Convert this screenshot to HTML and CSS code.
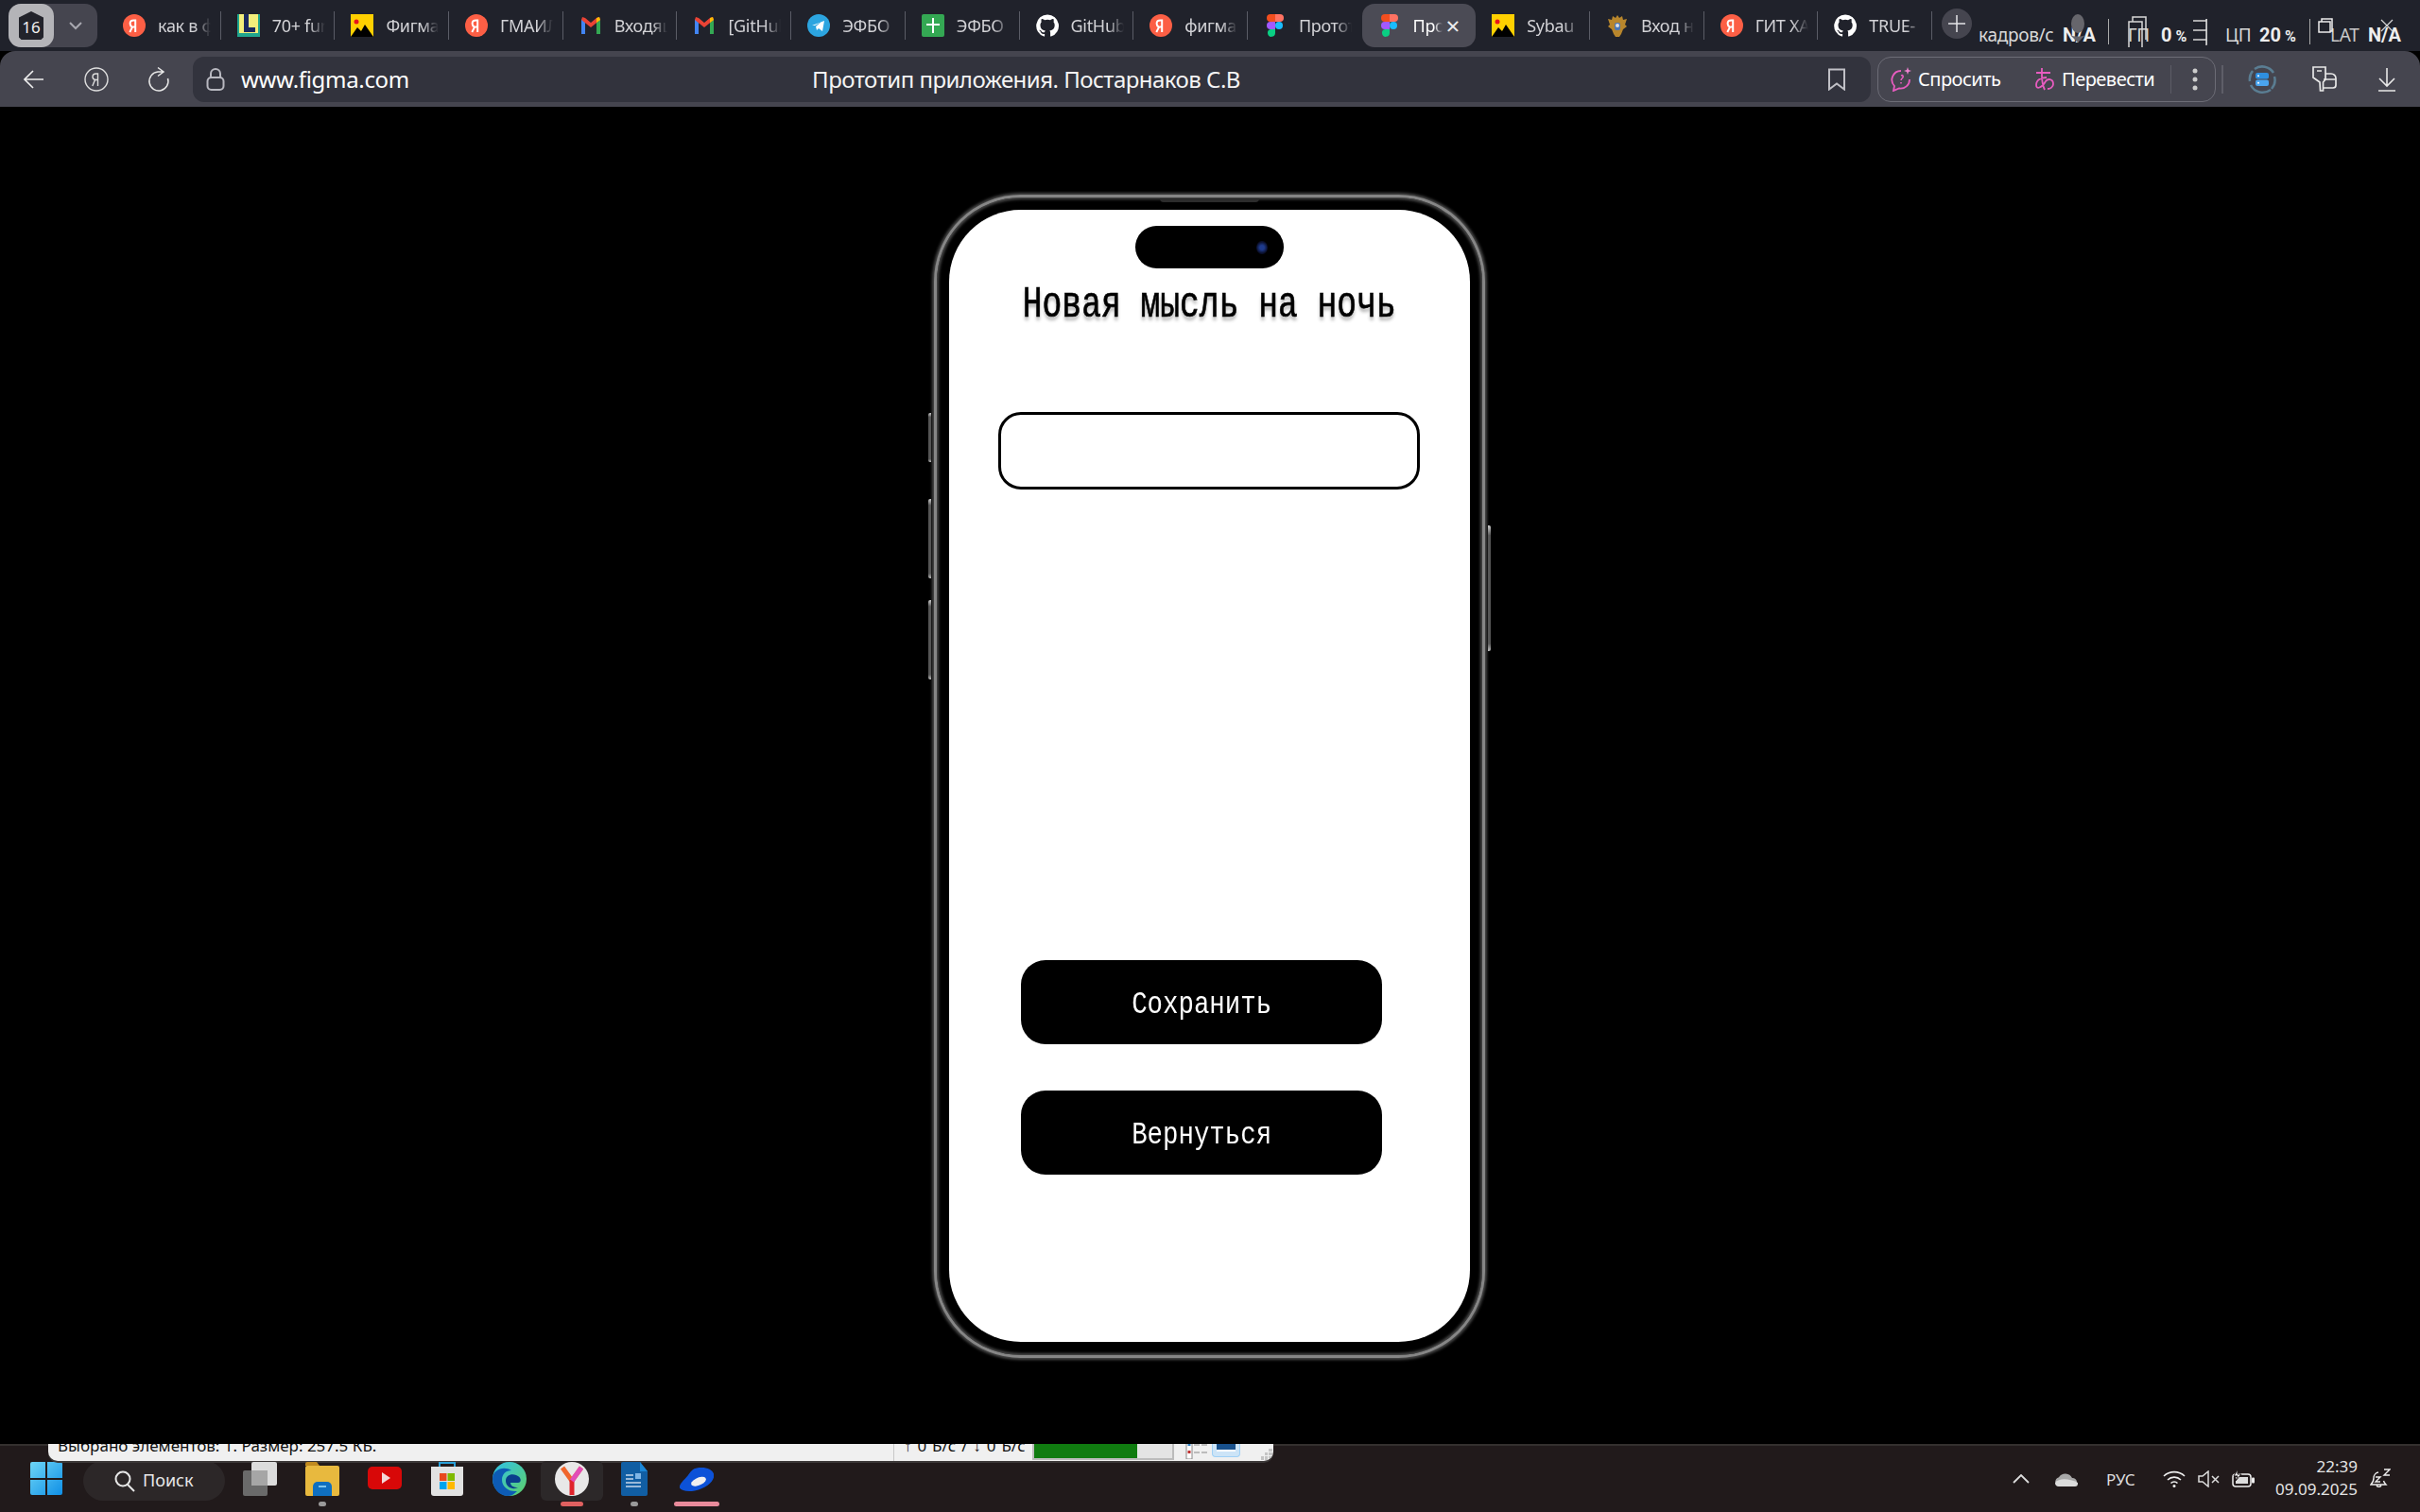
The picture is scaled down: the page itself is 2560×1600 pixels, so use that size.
FILE: index.html
```html
<!DOCTYPE html>
<html lang="ru">
<head>
<meta charset="utf-8">
<title>Прототип приложения. Постарнаков С.В</title>
<link rel="stylesheet" href="styles.css">
</head>
<body>
<svg class="defs" width="0" height="0" aria-hidden="true">
  <symbol id="fav-ya" viewBox="0 0 24 24"><circle cx="12" cy="12" r="12" fill="#fc5f45"/><path d="M13.2 19V6.5h-1.6c-2.6 0-4 1.4-4 3.4 0 1.800.8 2.800 2.400 3.800L7.300 19M13.200 13.500h-2.400" fill="none" stroke="#fff" stroke-width="2"/></symbol>
  <symbol id="fav-l" viewBox="0 0 24 24"><rect width="24" height="24" fill="#20a68e"/><rect x="2" y="0" width="20" height="20" fill="#f3ee7a"/><path d="M7 0h5v14h7v5H7z" fill="#1a2a5e"/></symbol>
  <symbol id="fav-img" viewBox="0 0 24 24"><rect width="24" height="24" fill="#ffd000"/><circle cx="6" cy="8" r="2.500" fill="#e8141c"/><path d="M0 24l7-10 4 4 4-7 9 13z" fill="#000"/></symbol>
  <symbol id="fav-m" viewBox="0 0 24 24"><path d="M2 21V6l4-2v17z" fill="#4285f4"/><path d="M18 21V4l4 2v15z" fill="#34a853"/><path d="M2 6l10 8 10-8-1-3-3 1-6 5-6-5-3-1z" fill="#ea4335"/><path d="M18 4l3-1 1 3-4 3z" fill="#fbbc04"/></symbol>
  <symbol id="fav-tg" viewBox="0 0 24 24"><circle cx="12" cy="12" r="12" fill="#2ca5e0"/><path d="M5 12l13-5-2 11-4-3-2 2-1-4 6-5-7 4z" fill="#fff"/></symbol>
  <symbol id="fav-sh" viewBox="0 0 24 24"><rect width="24" height="24" rx="2" fill="#34a853"/><path d="M11 4h2v6h6v2h-6v8h-2v-8H5v-2h6z" fill="#fff"/></symbol>
  <symbol id="fav-gh" viewBox="0 0 24 24"><path fill="#fff" d="M12 .5A11.800 11.800 0 0 0 8.300 23.500c.6.100.8-.3.800-.6v-2c-3.300.7-4-1.600-4-1.600-.5-1.400-1.300-1.800-1.300-1.800-1.100-.7.100-.7.100-.7 1.200.1 1.800 1.200 1.800 1.200 1.100 1.800 2.800 1.300 3.400 1 .1-.8.400-1.300.8-1.600-2.600-.3-5.400-1.300-5.400-5.900 0-1.300.5-2.300 1.200-3.200-.1-.3-.5-1.500.1-3.200 0 0 1-.3 3.300 1.200a11 11 0 0 1 6 0c2.300-1.500 3.300-1.200 3.300-1.200.6 1.700.2 2.900.1 3.200.8.900 1.200 1.900 1.200 3.200 0 4.600-2.800 5.600-5.400 5.900.4.400.8 1.100.8 2.200v3.300c0 .3.200.7.800.6A11.800 11.800 0 0 0 12 .5z"/></symbol>
  <symbol id="fav-fig" viewBox="0 0 24 24"><path d="M7 0h5v8H7a4 4 0 0 1 0-8z" fill="#f24e1e"/><path d="M12 0h5a4 4 0 0 1 0 8h-5z" fill="#ff7262"/><path d="M7 8h5v8H7a4 4 0 0 1 0-8z" fill="#a259ff"/><circle cx="16" cy="12" r="4" fill="#1abcfe"/><path d="M7 16h5v4a4 4 0 1 1-5-4z" fill="#0acf83"/></symbol>
  <symbol id="fav-eagle" viewBox="0 0 24 24"><path d="M12 1l2 3 3-2 1 4 4-1-2 6 2 2-4 3-2 5-2 3h-4l-2-3-2-5-4-3 2-2-2-6 4 1 1-4 3 2z" fill="#b8862c"/><rect x="9" y="9" width="6" height="8" rx="2" fill="#4a77b8"/><circle cx="12" cy="12" r="2" fill="#e0e0e0"/></symbol>
</svg>

<header class="tabstrip">
  <div class="counter-group">
    <div class="counter"><span class="counter-badge">16</span></div>
    <div class="expander"><svg width="16" height="10" viewBox="0 0 16 10"><path d="M2 2l6 6 6-6" fill="none" stroke="#a8a8b0" stroke-width="2"/></svg></div>
  </div>
  <nav class="tabs">
    <div class="tab"><svg class="fav"><use href="#fav-ya"/></svg><span class="tab-text">как в фигме</span></div>
    <div class="tab"><svg class="fav"><use href="#fav-l"/></svg><span class="tab-text">70+ fun</span></div>
    <div class="tab"><svg class="fav"><use href="#fav-img"/></svg><span class="tab-text">Фигма</span></div>
    <div class="tab"><svg class="fav"><use href="#fav-ya"/></svg><span class="tab-text">ГМАИЛ</span></div>
    <div class="tab"><svg class="fav"><use href="#fav-m"/></svg><span class="tab-text">Входящие</span></div>
    <div class="tab"><svg class="fav"><use href="#fav-m"/></svg><span class="tab-text">[GitHub]</span></div>
    <div class="tab"><svg class="fav"><use href="#fav-tg"/></svg><span class="tab-text">ЭФБО</span></div>
    <div class="tab"><svg class="fav"><use href="#fav-sh"/></svg><span class="tab-text">ЭФБО</span></div>
    <div class="tab"><svg class="fav"><use href="#fav-gh"/></svg><span class="tab-text">GitHub</span></div>
    <div class="tab"><svg class="fav"><use href="#fav-ya"/></svg><span class="tab-text">фигма</span></div>
    <div class="tab tab-before-active"><svg class="fav"><use href="#fav-fig"/></svg><span class="tab-text">Прототип</span></div>
    <div class="tab tab-active"><svg class="fav"><use href="#fav-fig"/></svg><span class="tab-text tab-text-short">Прототип</span><span class="tab-close">×</span></div>
    <div class="tab"><svg class="fav"><use href="#fav-img"/></svg><span class="tab-text">Sybau</span></div>
    <div class="tab"><svg class="fav"><use href="#fav-eagle"/></svg><span class="tab-text">Вход на</span></div>
    <div class="tab"><svg class="fav"><use href="#fav-ya"/></svg><span class="tab-text">ГИТ ХАБ</span></div>
    <div class="tab"><svg class="fav"><use href="#fav-gh"/></svg><span class="tab-text">TRUE-</span></div>
  </nav>
  <div class="new-tab"><svg width="18" height="18" viewBox="0 0 18 18"><path d="M9 0v18M0 9h18" stroke="#e4e4e8" stroke-width="1.500"/></svg></div>
  <div class="overlay">
    <svg class="ghost ghost-mic" viewBox="0 0 22 30"><ellipse cx="11" cy="10" rx="7" ry="10" fill="#66666c"/><path d="M3 22c3 2 13 2 16 0l-8 8z" fill="#66666c"/></svg>
    <svg class="ghost ghost-a" viewBox="0 0 20 34"><path d="M1 33V6h14v27M5 6V1h14v24" fill="none" stroke="#d8d8d8" stroke-width="1.500"/></svg>
    <svg class="ghost ghost-b" viewBox="0 0 16 28"><path d="M0 2h14M0 12h14M0 22h14M14 0v28" fill="none" stroke="#d8d8d8" stroke-width="1.500"/></svg>
    <svg class="ghost ghost-c" viewBox="0 0 16 16"><path d="M1 4h12v11H1zM4 4V1h11v13h-2" fill="none" stroke="#ececec" stroke-width="1.500"/></svg>
    <svg class="ghost ghost-d" viewBox="0 0 14 14"><path d="M1 1l12 12M13 1L1 13" stroke="#d8d8d8" stroke-width="1.200"/></svg>
    <span class="stat-label">кадров/с</span><b class="stat-val">N/A</b>
    <span class="stat-label stat-sep">ГП</span><b class="stat-val">0<small>%</small></b>
    <span class="stat-label stat-sep">ЦП</span><b class="stat-val">20<small>%</small></b>
    <span class="stat-label stat-sep stat-lat">LAT</span><b class="stat-val">N/A</b>
  </div>
</header>

<div class="toolbar">
  <div class="tool-btn"><svg width="22" height="22" viewBox="0 0 22 22"><path d="M21 11H2M10 2l-9 9 9 9" fill="none" stroke="#eee" stroke-width="1.600"/></svg></div>
  <div class="tool-btn"><svg width="26" height="26" viewBox="0 0 26 26"><circle cx="13" cy="13" r="12" fill="none" stroke="#ddd" stroke-width="1.400"/><path d="M14.500 20V7h-2c-2.500 0-3.500 1.500-3.500 3.200 0 1.800 1 3 3 3.300h2.500M11.500 13.500L8.800 20" fill="none" stroke="#ddd" stroke-width="1.400"/></svg></div>
  <div class="tool-btn"><svg width="24" height="28" viewBox="0 0 24 28"><path d="M21.500 13A10 10 0 1 1 11 6h6M11 1.500L17 6l-6 4.500" fill="none" stroke="#e8e8e8" stroke-width="1.500"/></svg></div>
  <div class="address">
    <div class="addr-left">
      <svg width="20" height="26" viewBox="0 0 20 26"><rect x="1.500" y="11" width="17" height="13" rx="4" fill="none" stroke="#b8b8c0" stroke-width="2"/><path d="M5 11V7a5 5 0 0 1 10 0v4" fill="none" stroke="#b8b8c0" stroke-width="2"/></svg>
      <span class="url">www.figma.com</span>
    </div>
    <span class="page-title">Прототип приложения. Постарнаков С.В</span>
    <svg class="bookmark" width="20" height="24" viewBox="0 0 20 24"><path d="M2 1.500h16v21l-8-6-8 6z" fill="none" stroke="#c0c0c6" stroke-width="2"/></svg>
  </div>
  <div class="assist">
    <svg class="assist-icon" width="24" height="26" viewBox="0 0 24 26"><path d="M12 4a9.500 9.500 0 0 0-7 16l-1 5 6-2.500A9.500 9.500 0 0 0 21 13" fill="none" stroke="#e85cc0" stroke-width="1.800"/><path d="M12 9c2-1 3 1 1.500 2.500S12 13 12 14M12 16v1.500" fill="none" stroke="#e85cc0" stroke-width="1.600"/><path d="M19 0l1 3 3 1-3 1-1 3-1-3-3-1 3-1z" fill="#f080d0"/></svg>
    <span class="assist-text assist-ask">Спросить</span>
    <svg class="assist-icon assist-second" width="24" height="26" viewBox="0 0 24 26"><path d="M3 6h15M9 1c0 8-1 15 3 23M14 11c-5 0-11 2-11 8 0 5 6 3 10-4 2-3 8-3 8 3 0 3-3 5-6 5" fill="none" stroke="#e85cc0" stroke-width="1.800"/></svg>
    <span class="assist-text assist-tr">Перевести</span>
    <span class="assist-div"></span>
    <svg class="assist-dots" width="6" height="26" viewBox="0 0 6 26"><circle cx="3" cy="4" r="2.500" fill="#ccc"/><circle cx="3" cy="13" r="2.500" fill="#ccc"/><circle cx="3" cy="22" r="2.500" fill="#ccc"/></svg>
  </div>
  <span class="tool-div"></span>
  <div class="tool-btn"><svg width="32" height="32" viewBox="0 0 32 32"><path d="M8 5a14 14 0 0 1 20 4M25 27A14 14 0 0 1 4 22M3 18A14 14 0 0 1 6 7M29 13a14 14 0 0 1-3 13" fill="none" stroke="#5a7d92" stroke-width="2.500"/><rect x="9" y="9" width="14" height="6.500" rx="2" fill="#2f8fe0"/><rect x="9" y="16.500" width="14" height="6.500" rx="2" fill="#4aa4ee"/><circle cx="12" cy="12.300" r="1" fill="#fff"/><circle cx="12" cy="19.800" r="1" fill="#fff"/></svg></div>
  <div class="tool-btn"><svg width="28" height="28" viewBox="0 0 28 28"><path d="M2 1h13v13l-2.500 3v9h-3l-.5-9L2 12zM15 8h6a5 5 0 0 1 5 5v7a3 3 0 0 1-3 3H13" fill="none" stroke="#e8e8e8" stroke-width="1.700"/><path d="M6 5h5M13 14h13" stroke="#e8e8e8" stroke-width="1.700"/></svg></div>
  <div class="tool-btn"><svg width="20" height="26" viewBox="0 0 20 26"><path d="M10 1v19M2 12l8 8 8-8M1 25h18" fill="none" stroke="#e8e8e8" stroke-width="1.600"/></svg></div>
</div>

<main class="stage">
  <div class="phone">
    <span class="side-key key-1"></span>
    <span class="side-key key-2"></span>
    <span class="side-key key-3"></span>
    <span class="side-key key-r"></span>
    <span class="earpiece"></span>
    <div class="screen">
      <div class="notch"><span class="camera"></span></div>
      <h1 class="title"><span class="title-text">Новая мысль на ночь</span></h1>
      <div class="field"></div>
      <div class="actions">
        <button class="action" type="button"><span class="action-text">Сохранить</span></button>
        <button class="action" type="button"><span class="action-text">Вернуться</span></button>
      </div>
    </div>
  </div>
</main>

<footer class="taskbar">
  <div class="peek">
    <span class="peek-info">Выбрано элементов: 1. Размер: 257.5 КБ.</span>
    <span class="peek-net">↑ 0 Б/с / ↓ 0 Б/с</span>
    <span class="peek-progress"><span class="peek-bar"></span></span>
    <svg class="peek-list" width="24" height="18" viewBox="0 0 24 18"><path d="M1 0v18h6V0z" fill="#fff" stroke="#888"/><rect x="2.500" y="1" width="3" height="3" fill="#2d7fc0"/><rect x="2.500" y="9" width="3" height="3" fill="#c03030"/><path d="M9 3h6M17 3h6M9 11h6M17 11h6" stroke="#aaa" stroke-width="1.500"/></svg>
    <span class="peek-view"><span class="peek-thumb"></span></span>
    <svg class="peek-grip" width="12" height="12" viewBox="0 0 12 12"><path d="M8 0h4v3H8zM4 4h3v3H4zM8 4h4v3H8zM0 8h3v4H0zM4 8h3v4H4zM8 8h4v2H8z" fill="#c4c4c4"/></svg>
  </div>
  <svg class="win-logo" width="34" height="35" viewBox="0 0 34 35"><defs><linearGradient id="winGrad" x1="0" y1="0" x2="1" y2="1"><stop offset="0" stop-color="#6ed6f6"/><stop offset="1" stop-color="#0f8fe6"/></linearGradient></defs><path d="M2 0h14v17H0V2a2 2 0 0 1 2-2zM18 0h14a2 2 0 0 1 2 2v15H18zM0 19h16v16H2a2 2 0 0 1-2-2zM18 19h16v14a2 2 0 0 1-2 2H18z" fill="url(#winGrad)"/></svg>
  <div class="search">
    <svg width="22" height="24" viewBox="0 0 22 24"><circle cx="9" cy="10" r="7.500" fill="none" stroke="#e8e8e8" stroke-width="2"/><path d="M14 16l7 7" stroke="#e8e8e8" stroke-width="2"/></svg>
    <span class="search-text">Поиск</span>
  </div>
  <div class="apps">
    <div class="app"><svg width="36" height="36" viewBox="0 0 36 36"><rect x="0" y="9" width="26" height="27" rx="2" fill="#6a6a6a"/><rect x="9" y="0" width="27" height="25" rx="2" fill="#dcdcdc"/><rect x="9" y="9" width="17" height="16" fill="#a6a6a6"/></svg></div>
    <div class="app app-dot"><svg width="36" height="36" viewBox="0 0 36 36"><path d="M0 2a2 2 0 0 1 2-2h10l3 4H0z" fill="#c08a20"/><rect y="4" width="36" height="32" rx="2" fill="#e8b93e"/><path d="M8 26a5 5 0 0 1 5-5h10a5 5 0 0 1 5 5v10H8z" fill="#0f6fc0"/><path d="M14 26h8" stroke="#7cc4f0" stroke-width="2"/></svg></div>
    <div class="app"><svg class="app-low" width="36" height="24" viewBox="0 0 36 24"><rect width="36" height="24" rx="5" fill="#d80808"/><path d="M15 6l9 6-9 6z" fill="#f4d8d8"/></svg></div>
    <div class="app"><svg width="36" height="36" viewBox="0 0 36 36"><path d="M10 6V1h16v5" fill="none" stroke="#2aa0d8" stroke-width="2"/><path d="M1 5h34v28a3 3 0 0 1-3 3H4a3 3 0 0 1-3-3z" fill="#e2e2e2"/><rect x="10" y="12" width="7.500" height="8" fill="#e8491d"/><rect x="18.500" y="12" width="7.500" height="8" fill="#7fba00"/><rect x="10" y="21" width="7.500" height="8" fill="#00a4ef"/><rect x="18.500" y="21" width="7.500" height="8" fill="#ffb900"/></svg></div>
    <div class="app"><svg width="36" height="36" viewBox="0 0 36 36"><defs><linearGradient id="edgeA" x1="0" y1="0" x2="1" y2="1"><stop offset="0" stop-color="#2fc1e8"/><stop offset="1" stop-color="#5fd068"/></linearGradient></defs><circle cx="18" cy="18" r="18" fill="url(#edgeA)"/><path d="M0 18C0 8 12 4 20 9c-6 0-10 4-10 10 0 7 7 13 16 12-3 3-6 5-10 5C7 36 0 28 0 18z" fill="#0d5bb5"/><path d="M14 20c0-6 6-8 11-6 6 2 6 8 2 8h-8c0 3 3 5 8 5-5 3-13 0-13-7z" fill="#0a3f8c"/></svg></div>
    <div class="app app-active"><svg width="36" height="36" viewBox="0 0 36 36"><circle cx="18" cy="18" r="18" fill="#e8e8e8"/><path d="M8 6l10 14 10-14" fill="none" stroke="#f0662c" stroke-width="5"/><path d="M18 19v16" stroke="#e0242c" stroke-width="5"/><path d="M28 6l-10 14" stroke="#e24cb8" stroke-width="5"/></svg></div>
    <div class="app app-dot"><svg width="28" height="36" viewBox="0 0 28 36"><path d="M0 2a2 2 0 0 1 2-2h18l8 10v24a2 2 0 0 1-2 2H2a2 2 0 0 1-2-2z" fill="#115ea3"/><path d="M20 0l8 10h-8z" fill="#1b86d6"/><path d="M5 14h8M5 18h8M5 22h16M5 26h16" stroke="#c8d8ea" stroke-width="1.500"/><rect x="15" y="12" width="6" height="6" fill="#7fb6e6"/></svg></div>
    <div class="app app-bar"><svg class="app-low" width="36" height="27" viewBox="0 0 36 36" preserveAspectRatio="none"><path d="M18 2C28 0 34 4 36 10c2 8-6 20-20 24C8 36 2 34 0 30c-1-6 6-12 10-20 2-4 4-7 8-8z" fill="#0c52d8"/><ellipse cx="20" cy="21" rx="9" ry="5" transform="rotate(-35 20 21)" fill="#f0f0f0"/></svg></div>
  </div>
  <div class="tray">
    <svg width="18" height="10" viewBox="0 0 18 10"><path d="M1 9l8-8 8 8" fill="none" stroke="#ddd" stroke-width="1.800"/></svg>
    <svg class="tray-cloud" width="24" height="15" viewBox="0 0 24 15"><path d="M5 15a5 5 0 0 1-1-9.800A8 8 0 0 1 18 6a4.500 4.500 0 0 1 1 9z" fill="#a8a8a8"/><path d="M0 11c4-5 14-5 24 0v1a3 3 0 0 1-3 3H4a4 4 0 0 1-4-4z" fill="#dcdcdc"/></svg>
    <span class="tray-lang">РУС</span>
    <svg class="tray-wifi" width="24" height="18" viewBox="0 0 24 18"><path d="M1 6a16 16 0 0 1 22 0M5 10a10 10 0 0 1 14 0M8.500 13.500a5 5 0 0 1 7 0" fill="none" stroke="#eee" stroke-width="1.600"/><circle cx="12" cy="16.500" r="1.500" fill="#eee"/></svg>
    <svg class="tray-sound" width="24" height="18" viewBox="0 0 24 18"><path d="M1 6h4l6-5v16l-6-5H1z" fill="none" stroke="#ddd" stroke-width="1.500"/><path d="M15 6l7 7M22 6l-7 7" stroke="#ddd" stroke-width="1.500"/></svg>
    <svg class="tray-batt" width="24" height="20" viewBox="0 0 24 20"><rect x="1" y="5" width="19" height="13" rx="3" fill="none" stroke="#eee" stroke-width="1.500"/><rect x="4" y="8" width="13" height="7" fill="#ddd"/><rect x="21" y="8.500" width="3" height="6" rx="1" fill="#eee"/><path d="M6 0L2 7h4L4 12l6-7H6z" fill="#eee" stroke="#211a1b"/></svg>
    <div class="clock"><span>22:39</span><span>09.09.2025</span></div>
    <svg class="tray-bell" width="22" height="22" viewBox="0 0 22 22"><path d="M9 4a6 6 0 0 0-5 6c0 4-1 5-3 7h16c-1-1-2-2-2.500-4M7 18a3 3 0 0 0 5 0" fill="none" stroke="#eee" stroke-width="1.400"/><path d="M15 1h6l-6 6h6M6 9h5l-5 5h5" fill="none" stroke="#eee" stroke-width="1.400"/></svg>
  </div>
</footer>
</body>
</html>
```

FILE: styles.css
```css
* { box-sizing: border-box; }
html, body { margin: 0; padding: 0; }
body {
  width: 2560px;
  height: 1600px;
  display: flex;
  flex-direction: column;
  overflow: hidden;
  background: #000;
  font-family: "Noto Sans", Roboto, sans-serif;
  color: #fff;
}
.defs { position: absolute; }

/* tab strip */
.tabstrip {
  position: relative;
  height: 54px;
  flex: none;
  display: flex;
  background: #20222b;
  padding: 4px 0 0 9px;
}
.counter-group {
  width: 94px;
  height: 46px;
  display: flex;
  background: #45454f;
  border-radius: 13px;
  flex: none;
}
.counter {
  width: 48px;
  background: #b4b4b8;
  border-radius: 13px;
  display: flex;
  align-items: center;
  justify-content: center;
}
.counter-badge {
  width: 26px;
  height: 30px;
  background: #22232b;
  color: #f0f0f0;
  font-size: 17px;
  line-height: 33px;
  text-align: center;
  clip-path: polygon(50% 0, 100% 22%, 100% 92%, 90% 100%, 10% 100%, 0 92%, 0 22%);
}
.expander { flex: 1; display: flex; align-items: center; justify-content: center; }
.tabs { display: flex; margin-left: 10px; height: 46px; }
.tab {
  width: 120.7px;
  height: 46px;
  display: flex;
  align-items: center;
  padding-left: 17px;
  gap: 13px;
  position: relative;
  flex: none;
}
.tab::after {
  content: "";
  position: absolute;
  right: 0;
  top: 8px;
  height: 30px;
  width: 1px;
  background: #5a5c66;
}
.tab-before-active::after, .tab-active::after { display: none; }
.tab-active { background: #4b4b55; border-radius: 13px; }
.fav { width: 24px; height: 24px; flex: none; }
.tab-text {
  width: 56px;
  overflow: hidden;
  white-space: nowrap;
  font-size: 18px;
  letter-spacing: -0.3px;
  color: #d2d2d6;
  -webkit-mask-image: linear-gradient(90deg, #000 70%, transparent 100%);
  mask-image: linear-gradient(90deg, #000 70%, transparent 100%);
}
.tab-active .tab-text { color: #fff; }
.tab-text-short { width: 31px; }
.tab-close { font-size: 26px; line-height: 26px; color: #eee; margin-left: -9px; }
.new-tab {
  width: 32px;
  height: 32px;
  margin: 5px 0 0 10px;
  border-radius: 50%;
  background: #45454f;
  display: flex;
  align-items: center;
  justify-content: center;
  flex: none;
}

/* translucent stats drawn over the tab strip */
.overlay {
  position: absolute;
  left: 2093px;
  top: 22px;
  width: 460px;
  height: 30px;
  display: grid;
  grid-template-columns: 89px 48px 21px 35px 48px 20px 36px 53px 20px 42px 40px;
  align-items: center;
  font-size: 19px;
  color: #d8d8d8;
}
.stat-label { white-space: nowrap; letter-spacing: -0.3px; }
.stat-val { font-family: Roboto, sans-serif; font-size: 20px; font-weight: 700; color: #eee; white-space: nowrap; }
.stat-val small { font-size: 16px; margin-left: 4px; }
.stat-sep { grid-column-end: span 1; }
.overlay .stat-sep:nth-of-type(2) { grid-column-start: 4; }
.overlay .stat-sep:nth-of-type(3) { grid-column-start: 7; }
.overlay .stat-sep:nth-of-type(4) { grid-column-start: 10; }
.stat-lat { padding-left: 2px; color: #c8c8c8; }
.ghost { position: absolute; }
.ghost-mic { left: 94px; top: -7px; width: 22px; height: 30px; }
.ghost-a { left: 158px; top: -5px; width: 20px; height: 34px; }
.ghost-b { left: 227px; top: -2px; width: 16px; height: 28px; }
.ghost-c { left: 359px; top: -3px; width: 16px; height: 16px; }
.ghost-d { left: 425px; top: -2px; width: 14px; height: 14px; }
.overlay::before, .overlay::after {
  content: "";
  position: absolute;
  width: 1px;
  top: -2px;
  height: 27px;
  background: #aaa;
}
.overlay::before { left: 137px; box-shadow: 104px 0 0 #aaa; }
.overlay::after { left: 350px; }

/* toolbar */
.toolbar {
  height: 59px;
  flex: none;
  display: flex;
  align-items: flex-start;
  background: #45454f;
  border-radius: 16px 16px 0 0;
  padding: 6px 0 0 3px;
}
.tool-btn {
  width: 66px;
  height: 48px;
  flex: none;
  display: flex;
  align-items: center;
  justify-content: center;
}
.address {
  width: 1775px;
  height: 48px;
  margin-left: 3px;
  flex: none;
  border-radius: 12px;
  background: #32333d;
  display: grid;
  grid-template-columns: 1fr auto 1fr;
  align-items: center;
  padding: 0 26px 0 14px;
}
.addr-left { display: flex; align-items: center; gap: 17px; }
.url { font-size: 24px; letter-spacing: -0.32px; color: #fff; margin-top: -2px; }
.page-title { font-size: 24px; letter-spacing: -0.52px; color: #f4f4f4; white-space: nowrap; margin-top: -2px; }
.bookmark { justify-self: end; }
.assist {
  width: 358px;
  height: 48px;
  margin-left: 7px;
  flex: none;
  border: 1px solid #6c6c76;
  border-radius: 14px;
  display: flex;
  align-items: center;
  padding-left: 12px;
}
.assist-icon { flex: none; }
.assist-second { margin-left: 33px; }
.assist-text { font-size: 20px; letter-spacing: -0.5px; margin: -2px 0 0 6px; white-space: nowrap; color: #fff; }
.assist-ask { width: 89px; }
.assist-tr { width: 99px; margin-left: 6px; }
.assist-div { width: 1px; height: 30px; background: #5c5c66; margin-left: 16px; flex: none; }
.assist-dots { margin-left: 22px; flex: none; }
.tool-div { width: 2px; height: 30px; background: #5e5e68; margin: 9px 8px 0 6px; flex: none; }

/* stage with the phone */
.stage {
  flex: 1;
  display: flex;
  justify-content: center;
  align-items: flex-start;
  background: #000;
  padding: 93px 0 0 0;
}
.phone {
  position: relative;
  width: 583px;
  height: 1231px;
  padding: 13px;
  border: 3px solid #868686;
  border-radius: 92px;
  background: #000;
  box-shadow: 0 0 3px 2px #4a4a4a, inset 0 0 3px 2px #4a4a4a;
  margin-right: 1px;
}
.side-key {
  position: absolute;
  width: 3px;
  border-radius: 2px 0 0 2px;
  background: linear-gradient(180deg, #ccc 0, #555 8%, #555 94%, #bbb 100%);
}
.key-1 { left: -9px; top: 228px; height: 52px; }
.key-2 { left: -9px; top: 319px; height: 84px; }
.key-3 { left: -9px; top: 426px; height: 84px; }
.key-r { right: -9px; top: 347px; height: 133px; border-radius: 0 2px 2px 0; }
.earpiece {
  position: absolute;
  left: 236px;
  top: 1px;
  width: 105px;
  height: 4px;
  background: #2c2c2c;
  border-radius: 0 0 4px 4px;
}
.screen {
  width: 551px;
  height: 1198px;
  background: #fff;
  border-radius: 76px;
  display: flex;
  flex-direction: column;
  overflow: hidden;
}
.notch {
  width: 157px;
  height: 45px;
  margin: 17px auto 0;
  flex: none;
  background: #000;
  border-radius: 23px;
  display: flex;
  align-items: center;
  justify-content: flex-end;
  padding-right: 17px;
}
.camera {
  width: 12px;
  height: 14px;
  border-radius: 50%;
  background: radial-gradient(circle, #1e3a8c 0 25%, #0a0f2a 65%);
}
.title {
  margin: 16px 0 0;
  height: 46px;
  font: 400 46px/46px "Liberation Mono", monospace;
  -webkit-text-stroke: 0.7px #000;
  color: #000;
  text-align: center;
  white-space: nowrap;
  text-shadow: 0 4px 4px rgba(0, 0, 0, 0.3);
  flex: none;
}
.title-text { display: inline-block; transform: scaleX(0.753); }
.field {
  width: 446px;
  height: 82px;
  margin: 90px 0 0 52px;
  flex: none;
  border: 3px solid #000;
  border-radius: 24px;
}
.actions {
  display: flex;
  flex-direction: column;
  gap: 49px;
  margin: 498px 0 0 76px;
}
.action {
  width: 382px;
  height: 89px;
  background: #000;
  border: 0;
  padding: 6px 0 0;
  border-radius: 26px;
  color: #fff;
  font: 400 33px/33px "Liberation Mono", monospace;
}
.action-text { display: inline-block; transform: scaleX(0.83); }

/* taskbar */
.taskbar {
  position: relative;
  height: 72px;
  flex: none;
  display: flex;
  align-items: flex-start;
  background: #211a1b;
  border-top: 2px solid #34302f;
  padding: 17px 0 0 32px;
  color: #e8e8e8;
}
.peek {
  position: absolute;
  left: 51px;
  top: -2px;
  width: 1296px;
  height: 18px;
  background: #f0f0f0;
  border-radius: 0 0 10px 10px;
  box-shadow: 0 2px 0 #3c3838;
  overflow: hidden;
  color: #111;
}
.peek-info, .peek-net {
  position: absolute;
  bottom: 4px;
  font-size: 17px;
  line-height: 24px;
  white-space: nowrap;
}
.peek-info { left: 10px; }
.peek-net { left: 905px; word-spacing: 1.5px; }
.peek-net::before {
  content: "";
  position: absolute;
  left: -11px;
  top: 0;
  height: 30px;
  width: 1px;
  background: #c8c8c8;
}
.peek-progress {
  position: absolute;
  left: 1041px;
  top: 0;
  width: 150px;
  height: 17px;
  background: #e4e4e4;
  border: 2px solid #bcbcbc;
  border-top: 0;
}
.peek-bar { display: block; width: 109px; height: 15px; background: #107c10; }
.peek-list { position: absolute; left: 1203px; top: -2px; }
.peek-view {
  position: absolute;
  left: 1231px;
  top: 0;
  width: 30px;
  height: 14px;
  background: #cce4f7;
  border: 1px solid #9fd0f5;
  border-top: 0;
  border-radius: 0 0 4px 4px;
}
.peek-thumb { display: block; width: 20px; height: 8px; margin: 0 auto; background: #17508c; border-bottom: 2px solid #fff; }
.peek-grip { position: absolute; right: 1px; bottom: 1px; }
.win-logo { flex: none; }
.search {
  width: 150px;
  height: 42px;
  margin: -1px 0 0 22px;
  background: #2c2728;
  border-radius: 21px;
  display: flex;
  align-items: center;
  gap: 8px;
  padding-left: 33px;
  flex: none;
}
.search-text { font-size: 18px; color: #e8e8e8; margin-top: -2px; }
.apps { display: flex; margin-left: 4px; flex: none; }
.app {
  position: relative;
  width: 66px;
  height: 54px;
  margin-top: -1px;
  padding-top: 1px;
  display: flex;
  justify-content: center;
  flex: none;
}
.app-low { margin-top: 5px; }
.app-dot::after {
  content: "";
  position: absolute;
  left: 29px;
  top: 43px;
  width: 8px;
  height: 5px;
  border-radius: 3px;
  background: #9a9a9a;
}
.app-active { background: #2c2829; border-radius: 6px; height: 42px; }
.app-active::after {
  content: "";
  position: absolute;
  left: 21px;
  top: 43px;
  width: 24px;
  height: 5px;
  border-radius: 3px;
  background: #e06060;
}
.app-bar::after {
  content: "";
  position: absolute;
  left: 9px;
  top: 43px;
  width: 48px;
  height: 5px;
  border-radius: 3px;
  background: #e88a9a;
}
.tray {
  position: absolute;
  right: 0;
  top: 0;
  width: 440px;
  height: 70px;
  display: flex;
  align-items: center;
}
.tray svg { flex: none; }
.tray > svg:first-child { margin-left: 9px; }
.tray-cloud { margin-left: 27px; }
.tray-lang { font-size: 17px; margin-left: 30px; width: 30px; white-space: nowrap; color: #ddd; }
.tray-wifi { margin-left: 30px; }
.tray-sound { margin-left: 13px; }
.tray-batt { margin-left: 12px; }
.clock {
  width: 100px;
  margin: -3px 0 0 9px;
  display: flex;
  flex-direction: column;
  align-items: flex-end;
  gap: 4px;
  font-size: 17px;
  line-height: 20px;
  color: #e4e4e4;
}
.tray-bell { margin-left: 13px; }
```
